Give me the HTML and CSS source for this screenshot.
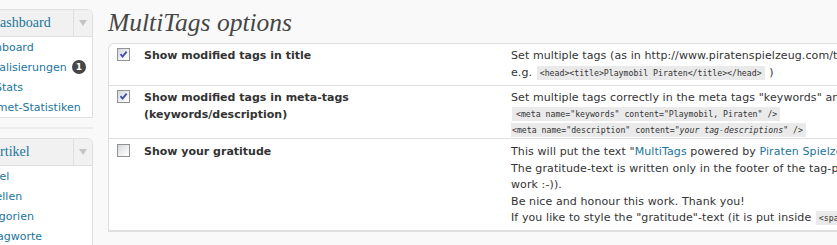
FILE: index.html
```html
<!DOCTYPE html>
<html lang="de">
<head>
<meta charset="utf-8">
<title>MultiTags options</title>
<link rel="stylesheet" href="styles.css">
</head>
<body>
<div class="layout">
  <aside class="sidebar">
    <div class="menu-box">
      <div class="menu-head">
        <span class="menu-title">Dashboard</span>
        <span class="menu-toggle"><span class="tri"></span></span>
      </div>
      <ul class="menu-items">
        <li class="menu-item"><span class="item-label">Dashboard</span></li>
        <li class="menu-item"><span class="item-label">Aktualisierungen</span><span class="badge">1</span></li>
        <li class="menu-item"><span class="item-label">WP Stats</span></li>
        <li class="menu-item"><span class="item-label">Akismet-Statistiken</span></li>
      </ul>
    </div>
    <div class="menu-sep"></div>
    <div class="menu-box">
      <div class="menu-head">
        <span class="menu-title">Artikel</span>
        <span class="menu-toggle"><span class="tri"></span></span>
      </div>
      <ul class="menu-items">
        <li class="menu-item"><span class="item-label">Artikel</span></li>
        <li class="menu-item"><span class="item-label">Erstellen</span></li>
        <li class="menu-item"><span class="item-label">Kategorien</span></li>
        <li class="menu-item"><span class="item-label">Schlagworte</span></li>
      </ul>
    </div>
  </aside>

  <main class="main">
    <h1 class="page-title">MultiTags options</h1>
    <div class="opts">
      <div class="row row-1">
        <div class="cell-check"><span class="cb checked"><svg viewBox="0 0 11 11" width="11" height="11"><path d="M2.5 5.2 L4.6 7.6 L8.6 2.6" fill="none" stroke="#3d4fb3" stroke-width="1.8"/></svg></span></div>
        <div class="cell-label">Show modified tags in title</div>
        <div class="cell-desc">
          <div class="line">Set multiple tags (as in http://www.piratenspielzeug.com/tag/playmobil+piraten/) in the title of the page.</div>
          <div class="line">e.g. <code>&lt;head&gt;&lt;title&gt;Playmobil Piraten&lt;/title&gt;&lt;/head&gt;</code> )</div>
        </div>
      </div>
      <div class="row row-2">
        <div class="cell-check"><span class="cb checked"><svg viewBox="0 0 11 11" width="11" height="11"><path d="M2.5 5.2 L4.6 7.6 L8.6 2.6" fill="none" stroke="#3d4fb3" stroke-width="1.8"/></svg></span></div>
        <div class="cell-label">Show modified tags in meta-tags<br>(keywords/description)</div>
        <div class="cell-desc">
          <div class="line">Set multiple tags correctly in the meta tags "keywords" and "description".</div>
          <div class="code-line"><code class="lead">&lt;meta name="keywords" content="Playmobil, Piraten" /&gt;</code></div>
          <div class="code-line"><code class="tight">&lt;meta name="description" content="<em>your tag-descriptions</em>" /&gt;</code></div>
        </div>
      </div>
      <div class="row row-3">
        <div class="cell-check"><span class="cb"></span></div>
        <div class="cell-label">Show your gratitude</div>
        <div class="cell-desc">
          <div class="line">This will put the text "<a href="#">MultiTags</a> powered by <a href="#">Piraten Spielzeug</a>" at the bottom of the tag-pages.</div>
          <div class="line">The gratitude-text is written only in the footer of the tag-pages, because this is where the plugin does its</div>
          <div class="line">work :-)).</div>
          <div class="line">Be nice and honour this work. Thank you!</div>
          <div class="line">If you like to style the "gratitude"-text (it is put inside <code>&lt;span class="multitags-gratitude"&gt;</code>)</div>
        </div>
      </div>
    </div>
  </main>
</div>
</body>
</html>
```

FILE: styles.css
```css
html, body {
  margin: 0;
  padding: 0;
  overflow: hidden;
}
body {
  background: #f9f9f9;
  font-family: "DejaVu Sans", Verdana, sans-serif;
  font-size: 11px;
  color: #333;
}
.layout {
  display: flex;
  align-items: flex-start;
  width: 1400px;
}

/* sidebar */
.sidebar {
  flex: none;
  width: 93px;
  margin-top: 9px;
  overflow: hidden;
}
.menu-box {
  background: #fff;
  border: 1px solid #dfdfdf;
  border-left: none;
  border-radius: 0 6px 0 0;
  overflow: hidden;
}
.menu-head {
  display: flex;
  height: 26px;
  background: #f1f1f1;
  border-bottom: 1px solid #dfdfdf;
}
.menu-title {
  flex: 1;
  margin-left: -10px;
  font-family: "Liberation Serif", Georgia, serif;
  font-size: 14px;
  line-height: 26px;
  color: #21759b;
  white-space: nowrap;
}
.menu-toggle {
  flex: none;
  width: 18px;
  border-left: 1px solid #dfdfdf;
  display: flex;
  align-items: center;
  justify-content: center;
}
.tri {
  width: 0;
  height: 0;
  border-left: 4px solid transparent;
  border-right: 4px solid transparent;
  border-top: 6px solid #c4c4c4;
}
.menu-items {
  list-style: none;
  margin: 0;
  padding: 0;
}
.menu-item {
  display: flex;
  align-items: center;
  height: 20px;
  color: #21759b;
  white-space: nowrap;
}
.item-label {
  margin-left: -26px;
}
.badge {
  margin-left: auto;
  margin-right: 6px;
  width: 14px;
  height: 14px;
  border-radius: 50%;
  background: #464646;
  color: #fff;
  font-size: 9px;
  font-weight: bold;
  line-height: 14px;
  text-align: center;
}
.menu-sep {
  height: 2px;
  margin: 9px 0 9px;
  background: #ececec;
}

/* main */
.main {
  flex: none;
  margin-left: 15px;
  width: 1200px;
}
.page-title {
  margin: 0 0 5px;
  padding-top: 8px;
  font-family: "Liberation Serif", Georgia, serif;
  font-style: italic;
  font-weight: normal;
  font-size: 25.5px;
  line-height: 30px;
  color: #464646;
}
.opts {
  background: #fff;
  border: 1px solid #dfdfdf;
  border-bottom-width: 2px;
  border-right: none;
  border-radius: 6px 0 0 0;
}
.row {
  display: grid;
  grid-template-columns: 35px 367px max-content;
  line-height: 17px;
}
.row + .row {
  border-top: 1px solid #dfdfdf;
}
.row-1 { padding: 3px 0 3px; }
.row-2 { padding: 3px 0 0; }
.row-3 { padding: 5px 0 3px; line-height: 16.5px; }

.cell-check {
  padding-left: 8px;
}
.cb {
  display: block;
  box-sizing: border-box;
  width: 13px;
  height: 13px;
  margin-top: 1px;
  border: 1px solid #8f9296;
  background: linear-gradient(135deg, #d6d7d9 0%, #f2f2f2 60%, #ffffff 100%);
}
.cb svg {
  display: block;
}
.row-3 .cb {
  margin-top: 0;
}
.cell-label {
  font-weight: bold;
  color: #333;
}
.cell-desc {
  white-space: nowrap;
  color: #333;
  letter-spacing: 0.1px;
}
.cell-desc a {
  color: #21759b;
  text-decoration: none;
}
code {
  font-family: "DejaVu Sans Mono", Consolas, monospace;
  font-size: 8.2px;
  letter-spacing: 0;
  background: #eaeaea;
  padding: 2px 3px;
  margin: 0 1px;
}
.code-line {
  height: 16px;
  line-height: 16px;
}
code.lead {
  padding-left: 4px;
  margin-left: 1px;
}
code.tight {
  padding-left: 1px;
  margin-left: 0;
}
```
